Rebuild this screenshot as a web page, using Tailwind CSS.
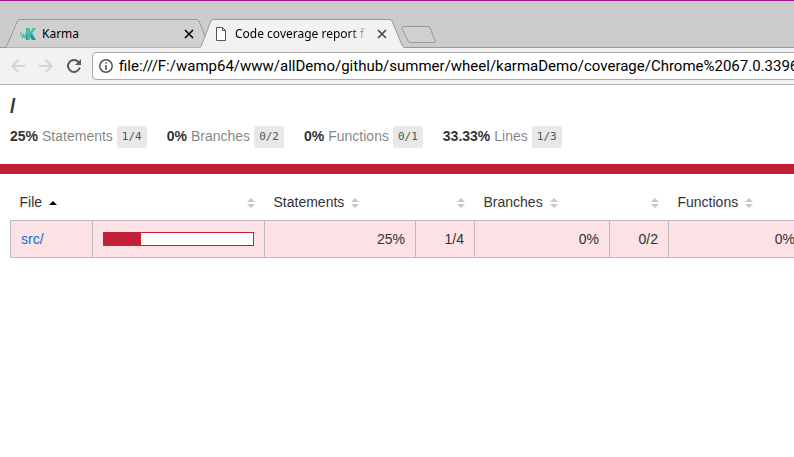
<!DOCTYPE html>
<html lang="en">
<head>
<meta charset="utf-8">
<title>Code coverage report for /</title>
<script src="https://cdn.jsdelivr.net/npm/@tailwindcss/browser@4"></script>
</head>
<body class="min-h-screen overflow-hidden bg-white font-['Liberation_Sans',Arial,sans-serif] text-sm text-[#333]">
<svg class="hidden" aria-hidden="true">
  <symbol id="sort" viewBox="0 0 8 10"><path fill="#c8c8c8" d="M0 4h8L4 0zM0 6h8L4 10z"/></symbol>
  <symbol id="close" viewBox="0 0 10 10"><path d="M1 1l8 8M9 1L1 9" stroke="currentColor" stroke-width="1.6" fill="none"/></symbol>
</svg>

<header class="border-b border-[#b0b0b0] bg-[#f2f2f2]">
  <div class="flex h-12 items-end border-t border-[#a8128c] bg-[#ccc] shadow-[inset_0_-1px_0_#999] font-['Noto_Sans','Open_Sans',sans-serif] text-xs text-black">
    <div class="relative ml-[5px] h-[29px] w-[206px] shrink-0">
      <svg class="absolute inset-0 h-full w-full" viewBox="0 0 206 29" aria-hidden="true"><path d="M0 28.5C1 28.5 1 28 2 26L12.500 2Q13 .5 14 .5H192Q193 .5 194 2L203 25Q204 28.500 206 28.500" fill="#d0d0d0" stroke="#999"/></svg>
      <div class="relative flex h-full items-center pr-[17px] pl-[15px]">
        <svg class="h-3 w-4" viewBox="0 0 16 12" aria-hidden="true"><path fill="#3dbfae" d="M0 4h1l1.500 4L3.500 5l1.500 3L6 4V0h4v4l3-4h3l-4 5.500L16 12h-4l-2-4v4H6V8l-1 3-1.500-2-1 2z"/><path fill="#2a9588" d="M6 8l1-3v7H6zM10 8l2-2.500L16 12h-4z"/></svg>
        <span class="ml-[6px] grow">Karma</span>
        <button aria-label="Close Karma tab" class="flex"><svg class="h-[10px] w-[10px]"><use href="#close"/></svg></button>
      </div>
    </div>
    <div class="relative -ml-3 h-[29px] w-[206px] shrink-0">
      <svg class="absolute inset-0 h-full w-full" viewBox="0 0 206 29" aria-hidden="true"><path d="M0 29C2 28.500 2 27 3 25L12 2Q13 .5 14 .5H191Q192 .5 193 2L202.500 25Q204 28.500 206 29" fill="#f2f2f2" stroke="#999"/></svg>
      <div class="relative flex h-full items-center pr-[18px] pl-[17px]">
        <svg class="h-[14px] w-[10px]" viewBox="0 0 10 14" aria-hidden="true"><path d="M.5.5h6l3 3v10h-9zM6.500.5v3h3" fill="#fff" stroke="#555"/></svg>
        <span class="ml-[9px] grow whitespace-nowrap bg-linear-to-r from-black from-85% to-transparent bg-clip-text text-transparent">Code coverage report f</span>
        <button aria-label="Close Code coverage tab" class="ml-2 flex text-[#444]"><svg class="h-[10px] w-[10px]"><use href="#close"/></svg></button>
      </div>
    </div>
    <button aria-label="New tab" class="mb-[5px] -ml-[4px] shrink-0"><svg class="block h-[17px] w-[35px]" viewBox="0 0 35 17"><path d="M3 .5H27Q28.500 .5 29 2L34 14.500Q35 16.500 33 16.500H9.500Q7.500 16.500 7 15L1 2.500Q.5 .5 3 .5z" fill="#d0d0d0" stroke="#999"/></svg></button>
  </div>
  <div class="flex h-9 items-center">
    <button aria-label="Back" class="ml-[11px] shrink-0"><svg class="block h-[14px] w-[14px]" viewBox="0 0 14 14" fill="none" stroke="#d3d3d5" stroke-width="2"><path d="M14 7H2M7.500 .8L1.400 7L7.500 13.200"/></svg></button>
    <button aria-label="Forward" class="ml-[14px] shrink-0"><svg class="block h-[14px] w-[14px]" viewBox="0 0 14 14" fill="none" stroke="#d3d3d5" stroke-width="2"><path d="M0 7H12M6.500 .8L12.600 7L6.500 13.200"/></svg></button>
    <button aria-label="Reload" class="ml-[14px] shrink-0"><svg class="block h-[14px] w-[14px]" viewBox="0 0 14 14"><path d="M11.500 3A6 6 0 1 0 12.800 8.500" fill="none" stroke="#5a5a5a" stroke-width="2"/><path d="M14 0v6H8z" fill="#5a5a5a"/></svg></button>
    <div class="-mr-1 ml-[11px] flex h-7 min-w-0 grow items-center rounded-sm border border-[#aaa] bg-white pl-[6px]">
      <svg class="h-[14px] w-[14px] shrink-0" viewBox="0 0 14 14" aria-hidden="true"><circle cx="7" cy="7" r="6.200" fill="none" stroke="#555" stroke-width="1.500"/><path d="M6.200 3.200h1.600v1.600H6.200zM6.200 6h1.600v5H6.200z" fill="#555"/></svg>
      <input aria-label="Address" class="ml-[6px] h-6 min-w-0 grow font-[Roboto,sans-serif] text-[15px] leading-6 text-black outline-none" value="file:///F:/wamp64/www/allDemo/github/summer/wheel/karmaDemo/coverage/Chrome%2067.0.3396">
    </div>
  </div>
</header>

<main>
  <div class="px-[10px] pt-[9px] pb-4">
    <h1 class="text-xl leading-6 font-bold">/</h1>
    <div class="mt-[7px] flex gap-5 whitespace-nowrap leading-[22px]">
      <div class="flex gap-1"><strong>25%</strong><span class="text-black/50">Statements</span><span class="mt-px rounded-[3px] bg-[#e8e8e8] px-[5px] font-['DejaVu_Sans_Mono',monospace] text-[11px] text-[#555]">1/4</span></div>
      <div class="flex gap-1"><strong>0%</strong><span class="text-black/50">Branches</span><span class="mt-px rounded-[3px] bg-[#e8e8e8] px-[5px] font-['DejaVu_Sans_Mono',monospace] text-[11px] text-[#555]">0/2</span></div>
      <div class="flex gap-1"><strong>0%</strong><span class="text-black/50">Functions</span><span class="mt-px rounded-[3px] bg-[#e8e8e8] px-[5px] font-['DejaVu_Sans_Mono',monospace] text-[11px] text-[#555]">0/1</span></div>
      <div class="flex gap-1"><strong>33.33%</strong><span class="text-black/50">Lines</span><span class="mt-px rounded-[3px] bg-[#e8e8e8] px-[5px] font-['DejaVu_Sans_Mono',monospace] text-[11px] text-[#555]">1/3</span></div>
    </div>
  </div>
  <div class="h-[10px] bg-[#c21f39]"></div>
  <div class="overflow-hidden px-[10px] pt-[10px]">
    <table class="w-[795px] table-fixed border-collapse whitespace-nowrap">
      <colgroup><col class="w-[82px]"><col class="w-[172px]"><col class="w-[151px]"><col class="w-[59px]"><col class="w-[135px]"><col class="w-[59px]"><col class="w-[137px]"></colgroup>
      <thead>
        <tr class="h-9 text-left">
          <th scope="col" class="px-[9px] font-normal">File <svg class="ml-[3px] inline-block h-1 w-2 align-middle" viewBox="0 0 8 4"><path d="M0 4h8L4 0z"/></svg></th>
          <th scope="col" aria-label="Chart" class="px-[10px] text-right"><svg class="inline-block h-[10px] w-2"><use href="#sort"/></svg></th>
          <th scope="col" class="px-[9px] font-normal">Statements <svg class="ml-[3px] inline-block h-[10px] w-2"><use href="#sort"/></svg></th>
          <th scope="col" aria-label="Statement count" class="px-[10px] text-right"><svg class="inline-block h-[10px] w-2"><use href="#sort"/></svg></th>
          <th scope="col" class="px-[9px] font-normal">Branches <svg class="ml-[3px] inline-block h-[10px] w-2"><use href="#sort"/></svg></th>
          <th scope="col" aria-label="Branch count" class="px-[10px] text-right"><svg class="inline-block h-[10px] w-2"><use href="#sort"/></svg></th>
          <th scope="col" class="px-[9px] font-normal">Functions <svg class="ml-[3px] inline-block h-[10px] w-2"><use href="#sort"/></svg></th>
        </tr>
      </thead>
      <tbody>
        <tr class="h-[37px] bg-[#fce1e5] text-right">
          <td class="border border-[#bbb] px-[10px] text-left"><a href="#" class="text-[#0074d9]">src/</a></td>
          <td class="border border-[#bbb] px-[10px]"><div role="img" aria-label="25% covered" class="h-[14px] border border-[#c21f39] bg-white"><div class="h-full bg-[#c21f39]" style="width:25%"></div></div></td>
          <td class="border border-[#bbb] px-[10px]">25%</td>
          <td class="border border-[#bbb] px-[10px]">1/4</td>
          <td class="border border-[#bbb] px-[10px]">0%</td>
          <td class="border border-[#bbb] px-[10px]">0/2</td>
          <td class="border border-[#bbb] px-[10px]">0%</td>
        </tr>
      </tbody>
    </table>
  </div>
</main>
</body>
</html>
